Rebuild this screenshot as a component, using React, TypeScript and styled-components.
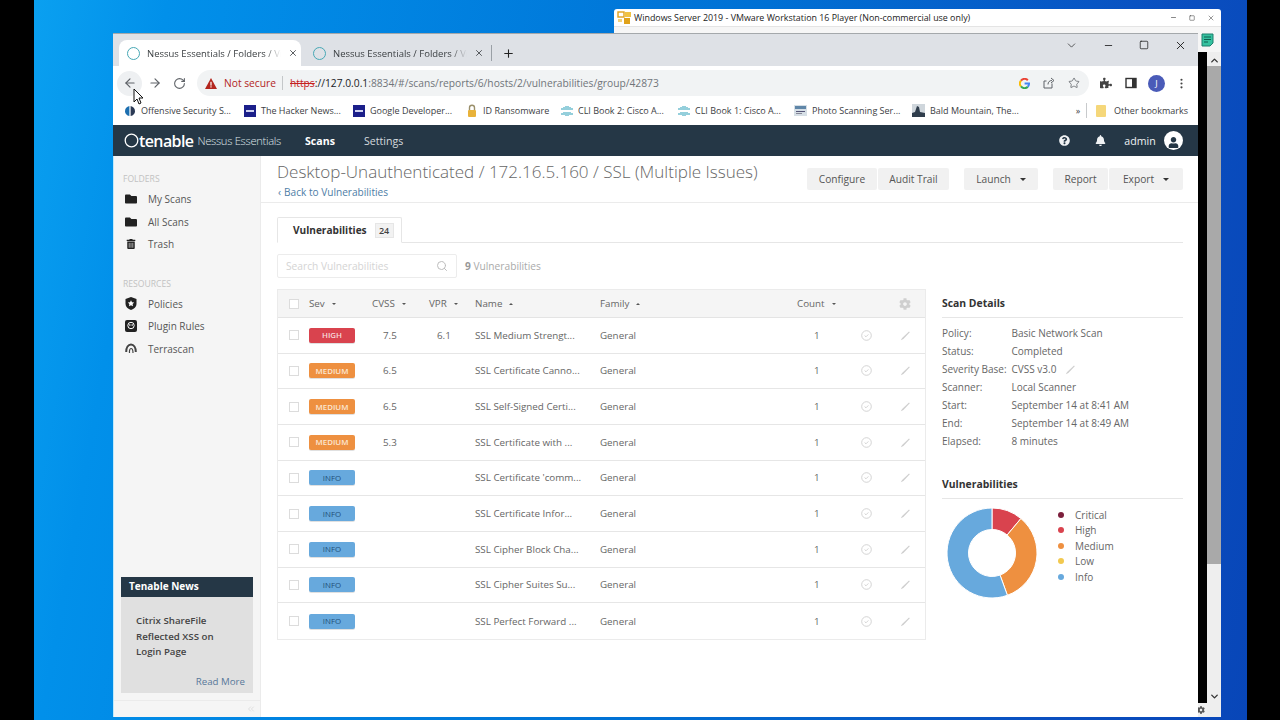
import styled, { createGlobalStyle } from "styled-components";
import { ArrowLeft, ArrowRight, ChevronDown, ChevronUp, ChevronsLeft, Minus, MoreVertical, Plus, RotateCw, Search, Square, Star, X } from "lucide-react";
import { FaBell, FaCog, FaFolder, FaPuzzlePiece, FaQuestionCircle, FaTrashAlt, FaUser } from "react-icons/fa";

const GlobalStyle = createGlobalStyle`
  html, body {
    margin: 0;
    padding: 0;
    width: 1280px;
    height: 720px;
    overflow: hidden;
    background: #000;
  }
  * { box-sizing: border-box; }
`;

const Screen = styled.div`
  display: flex;
  width: 1280px;
  height: 720px;
  padding-left: 34px;
  background: #000;
  font-family: "Open Sans", "Liberation Sans", sans-serif;
`;

const Desktop = styled.div`
  position: relative;
  width: 1213px;
  height: 720px;
  overflow: hidden;
  background: linear-gradient(100deg, #0aa0f0 0%, #0190ea 10%, #0070d4 55%, #0a4fc0 85%, #0846b8 100%);
`;

/* windows on the desktop */
const VmWindow = styled.div`
  position: absolute;
  left: 580px;
  top: 9px;
  width: 607px;
  height: 708px;
  display: flex;
  flex-direction: column;
  background: #fff;
  border-radius: 3px 3px 0 0;
`;

const VmTitle = styled.div`
  display: flex;
  align-items: center;
  height: 18px;
  padding: 0 6px 0 3px;
  gap: 2px;
  font-size: 8.9px;
  color: #222;
  border-bottom: 1px solid #e4e4e4;
  span {
    flex: 1;
  }
`;

const VmControls = styled.div`
  display: flex;
  align-items: center;
  gap: 12px;
  color: #333;
`;

const VmTools = styled.div`
  display: flex;
  justify-content: flex-end;
  align-items: flex-start;
  height: 25px;
  padding: 6px 7px 0 0;
  background: #f6f6f6;
`;

const VmBody = styled.div`
  flex: 1;
  display: flex;
  min-height: 0;
`;

const VmGuest = styled.div`
  flex: 1;
  display: flex;
  flex-direction: column;
  justify-content: flex-end;
`;

const GuestBlack = styled.div`
  flex: 1;
  background: #000;
`;

const VmStatus = styled.div`
  display: flex;
  justify-content: flex-end;
  align-items: center;
  height: 14px;
  color: #555;
  background: #f0f0f0;
`;

const GearSlot = styled.div`
  display: flex;
  justify-content: flex-start;
  width: 10px;
`;

const VmScroll = styled.div`
  display: flex;
  flex-direction: column;
  align-items: center;
  width: 14px;
  padding-top: 3px;
  background: #eeeeee;
  color: #333;
`;

const VmThumb = styled.div`
  flex: none;
  width: 100%;
  height: 498px;
  margin-bottom: 127px;
  background: #a9a9a9;
`;

const ChromeWindow = styled.div`
  position: absolute;
  left: 79px;
  top: 33px;
  width: 1085px;
  height: 684px;
  display: flex;
  flex-direction: column;
  background: #fff;
  border-top: 1px solid #a4a8ab;
`;

const TabStrip = styled.div`
  display: flex;
  align-items: flex-end;
  height: 32px;
  padding-left: 6px;
  background: #dee1e6;
  color: #3c4043;
`;

const BrowserTab = styled.div<{ $active?: boolean }>`
  display: flex;
  align-items: center;
  width: 182px;
  height: 26px;
  padding: 0 3px 0 8px;
  gap: 7px;
  margin-right: 4px;
  font-size: 9.5px;
  border-radius: 8px 8px 0 0;
  background: ${(props) => (props.$active ? "#fff" : "transparent")};
  span {
    flex: 1;
    white-space: nowrap;
    overflow: hidden;
    -webkit-mask-image: linear-gradient(90deg, #000 88%, transparent 100%);
    mask-image: linear-gradient(90deg, #000 88%, transparent 100%);
  }
`;

const FavRing = styled.i`
  flex: none;
  width: 13px;
  height: 13px;
  border-radius: 50%;
  border: 1px solid #47a8b5;
`;

const TabDivider = styled.div`
  width: 1px;
  height: 16px;
  margin: 0 10px 5px 0;
  background: #9aa0a6;
`;

const NewTab = styled.div`
  display: flex;
  margin-bottom: 6px;
  color: #222;
`;

const WinButtons = styled.div`
  margin-left: auto;
  align-self: stretch;
  display: flex;
  align-items: center;
  gap: 25px;
  padding: 0 11px 10px 0;
  color: #111;
`;

const Toolbar = styled.div`
  display: flex;
  align-items: center;
  height: 30px;
  padding: 4px 0 0 4px;
  color: #5f6368;
`;

const NavButton = styled.div<{ $hover?: boolean }>`
  display: flex;
  align-items: center;
  justify-content: center;
  width: 25px;
  height: 25px;
  border-radius: 50%;
  background: ${(props) => (props.$hover ? "#eef0f2" : "transparent")};
`;

const Omnibox = styled.div`
  display: flex;
  align-items: center;
  width: 892px;
  height: 26px;
  margin-left: 5px;
  padding: 0 9px 0 8px;
  border-radius: 13px;
  background: #f1f3f4;
  font-size: 10.25px;
`;

const NotSecure = styled.span`
  display: flex;
  align-items: center;
  gap: 7px;
  color: #b3261e;
  padding-right: 6px;
  border-right: 1px solid #c4c7c9;
  line-height: 14px;
`;

const UrlText = styled.span`
  margin-left: 7px;
  color: #70757a;
  white-space: nowrap;
  s {
    color: #c5221f;
  }
  b {
    font-weight: 400;
    color: #202124;
  }
`;

const OmniIcons = styled.div`
  margin-left: auto;
  display: flex;
  align-items: center;
  gap: 13px;
  color: #5f6368;
`;

const ToolIcons = styled.div`
  display: flex;
  align-items: center;
  gap: 13px;
  margin-left: 11px;
  color: #444;
`;

const Avatar = styled.div`
  display: flex;
  align-items: center;
  justify-content: center;
  width: 17px;
  height: 17px;
  margin: 0 -3px 0 -2px;
  border-radius: 50%;
  background: #4a5bb8;
  color: #fff;
  font-size: 9px;
`;

const Bookmarks = styled.div`
  display: flex;
  align-items: center;
  height: 29px;
  padding: 0 10px 0 11px;
  font-size: 9px;
  color: #3c4043;
  svg {
    flex: none;
  }
`;

const Bookmark = styled.div<{ $w: number }>`
  flex: none;
  display: flex;
  align-items: center;
  gap: 5px;
  width: ${(props) => props.$w}px;
  white-space: nowrap;
`;

const BookmarkEnd = styled.div`
  margin-left: auto;
  display: flex;
  align-items: center;
  gap: 7px;
  white-space: nowrap;
`;

const BarDivider = styled.i`
  width: 1px;
  height: 15px;
  margin: 0 1px 0 -1px;
  background: #c8cacc;
`;

const TopNav = styled.nav`
  display: flex;
  align-items: center;
  height: 31px;
  padding: 0 15px 0 11px;
  background: #253746;
  color: #fff;
`;

const Logo = styled.div`
  display: flex;
  align-items: center;
  width: 181px;
  font-size: 16px;
  font-weight: 600;
  letter-spacing: -0.6px;
  color: #fff;
  small {
    margin-left: 4px;
    font-size: 11.2px;
    font-weight: 300;
    letter-spacing: -0.3px;
    color: #dfe4e8;
  }
`;

const NavLink = styled.a<{ $active?: boolean }>`
  width: 59px;
  font-size: 10.6px;
  font-weight: ${(props) => (props.$active ? 700 : 400)};
  color: ${(props) => (props.$active ? "#fff" : "#d5dade")};
`;

const NavRight = styled.div`
  margin-left: auto;
  display: flex;
  align-items: center;
  font-size: 10.6px;
  color: #f0f2f4;
`;

const NavIcon = styled.div<{ $w?: number }>`
  display: flex;
  width: ${(props) => props.$w ?? 36}px;
  justify-content: center;
`;

const UserCircle = styled.div`
  display: flex;
  align-items: flex-end;
  justify-content: center;
  width: 19px;
  height: 19px;
  margin-left: 2px;
  padding-bottom: 2px;
  border-radius: 50%;
  background: #fff;
  color: #253746;
`;

const AppBody = styled.div`
  flex: 1;
  display: flex;
  min-height: 0;
`;

const Sidebar = styled.aside`
  display: flex;
  flex-direction: column;
  width: 148px;
  padding-top: 17px;
  background: #f5f5f5;
  border-right: 1px solid #ebebeb;
  border-left: 1px solid #bfe9fb;
`;

const SideLabel = styled.div`
  margin: 0 0 2px 9px;
  height: 13px;
  font-size: 8.6px;
  line-height: 13px;
  color: #c2c2c2;
`;

const SideItem = styled.div`
  display: flex;
  align-items: center;
  height: 22.5px;
  padding-left: 11px;
  gap: 11px;
  font-size: 10px;
  color: #555;
`;

const SideIcon = styled.div`
  display: flex;
  justify-content: center;
  width: 12px;
  color: #222;
`;

const SideGroup = styled.div`
  margin-bottom: 22px;
`;

const NewsBox = styled.div`
  margin: auto 7px 0 7px;
  height: 116px;
  display: flex;
  flex-direction: column;
  background: #e0e0e0;
`;

const NewsHead = styled.div`
  height: 20px;
  padding-left: 8px;
  font-size: 10px;
  font-weight: 700;
  line-height: 19px;
  background: #253746;
  color: #fff;
`;

const NewsTitle = styled.div`
  padding: 16px 10px 0 15px;
  font-size: 9.7px;
  font-weight: 600;
  line-height: 15.5px;
  color: #444;
`;

const NewsMore = styled.a`
  margin-top: auto;
  padding: 0 8px 5px 0;
  text-align: right;
  font-size: 9.7px;
  color: #58789a;
`;

const SideFooter = styled.div`
  display: flex;
  justify-content: flex-end;
  align-items: center;
  height: 17px;
  margin-top: 7px;
  padding-right: 4px;
  border-top: 1px solid #ebebeb;
  color: #d0d0d0;
`;

const Main = styled.main`
  flex: 1;
  display: flex;
  flex-direction: column;
  min-width: 0;
`;

const PageHead = styled.header`
  display: flex;
  justify-content: space-between;
  height: 47px;
  padding: 4px 15px 0 16px;
  border-bottom: 1px solid #ebebeb;
`;

const PageTitle = styled.h1`
  margin: 0;
  font-size: 17.05px;
  font-weight: 300;
  line-height: 23px;
  white-space: nowrap;
  color: #666;
`;

const BackLink = styled.a`
  display: block;
  font-size: 10.1px;
  line-height: 14px;
  margin-top: 2px;
  color: #4e7da6;
  i {
    font-style: normal;
    margin: 0 3px 0 1px;
  }
`;

const Actions = styled.div`
  display: flex;
  gap: 15px;
  padding-top: 8px;
`;

const ActionGroup = styled.div`
  display: flex;
  gap: 1px;
`;

const ActionButton = styled.button<{ $w: number }>`
  display: flex;
  align-items: center;
  justify-content: center;
  gap: 9px;
  width: ${(props) => props.$w}px;
  height: 22px;
  padding: 0;
  border: 0;
  border-radius: 2px;
  background: #f1f1f1;
  font-family: inherit;
  font-size: 10.2px;
  color: #555;
`;

const Caret = styled.i<{ $up?: boolean; $size?: number; $color?: string }>`
  display: inline-block;
  width: 0;
  height: 0;
  border-left: ${(props) => props.$size ?? 2}px solid transparent;
  border-right: ${(props) => props.$size ?? 2}px solid transparent;
  border-top: ${(props) => (props.$up ? "0" : `${props.$size ?? 2}px solid ${props.$color ?? "#555"}`)};
  border-bottom: ${(props) => (props.$up ? `${props.$size ?? 2}px solid ${props.$color ?? "#555"}` : "0")};
`;

const Content = styled.div`
  flex: 1;
  padding: 14px 15px 0 16px;
`;

const TabBar = styled.div`
  display: flex;
  height: 26px;
  border-bottom: 1px solid #e6e6e6;
`;

const VulnTab = styled.div`
  display: flex;
  align-items: center;
  width: 125px;
  height: 26px;
  padding-left: 15px;
  gap: 8px;
  font-size: 10.1px;
  font-weight: 700;
  color: #333;
  background: #fff;
  border: 1px solid #e6e6e6;
  border-bottom-color: #fff;
  border-radius: 2px 2px 0 0;
`;

const TabCount = styled.span`
  display: flex;
  align-items: center;
  justify-content: center;
  width: 19px;
  height: 15px;
  font-size: 9px;
  font-weight: 600;
  background: #f2f2f2;
  border: 1px solid #e6e6e6;
  color: #444;
`;

const FilterRow = styled.div`
  display: flex;
  align-items: center;
  gap: 8px;
  margin-top: 11px;
  height: 24px;
  font-size: 10.2px;
  color: #aaa;
  b {
    color: #999;
  }
`;

const SearchField = styled.div`
  display: flex;
  align-items: center;
  justify-content: space-between;
  width: 180px;
  height: 24px;
  padding: 0 8px;
  border: 1px solid #ececec;
  border-radius: 2px;
  color: #d4d4d4;
  font-size: 10.2px;
`;

const Split = styled.div`
  display: flex;
  gap: 16px;
  margin-top: 11px;
`;

const Table = styled.div`
  width: 649px;
  border: 1px solid #ebebeb;
  border-top: 0;
`;

const Columns = "31px 63px 57px 46px 125px 197px 55px 30px 44px";

const HeadRow = styled.div`
  display: grid;
  grid-template-columns: ${Columns};
  align-items: center;
  height: 29px;
  background: #f5f5f5;
  border-top: 1px solid #ebebeb;
  border-bottom: 1px solid #e4e4e4;
  font-size: 9.8px;
  color: #666;
`;

const BodyRow = styled.div`
  display: grid;
  grid-template-columns: ${Columns};
  align-items: center;
  height: 35.67px;
  border-bottom: 1px solid #e6e6e6;
  font-size: 9.8px;
  color: #666;
  &:last-child {
    border-bottom: 0;
  }
`;

const HeadCell = styled.div`
  display: flex;
  align-items: center;
  gap: 7px;
`;

const Check = styled.i`
  display: block;
  width: 10px;
  height: 10px;
  margin-left: 11px;
  background: #fff;
  border: 1px solid #dcdcdc;
`;

const Severity = styled.span<{ $bg: string; $color: string; $weight: number }>`
  display: flex;
  align-items: center;
  justify-content: center;
  width: 46px;
  height: 15px;
  font-size: 7.9px;
  font-weight: ${(props) => props.$weight};
  border-radius: 2px;
  background: ${(props) => props.$bg};
  color: ${(props) => props.$color};
  box-shadow: 0 1px 0 rgba(0, 0, 0, 0.12);
`;

const ScoreCell = styled.div<{ $pad: number }>`
  padding-left: ${(props) => props.$pad}px;
`;

const Ellipsis = styled.div`
  white-space: nowrap;
`;

const IconCell = styled.div<{ $pad?: number }>`
  display: flex;
  padding-left: ${(props) => props.$pad ?? 0}px;
  color: #cfcfcf;
`;

const SidePanel = styled.section`
  width: 241px;
  margin-top: 1px;
`;

const PanelTitle = styled.h3`
  margin: 0;
  height: 28px;
  font-size: 10.4px;
  font-weight: 700;
  line-height: 27px;
  color: #333;
  border-bottom: 1px solid #e6e6e6;
`;

const DetailList = styled.div`
  padding-top: 6px;
  margin-bottom: 21px;
`;

const DetailRow = styled.div`
  display: flex;
  align-items: center;
  height: 18px;
  font-size: 10px;
  color: #666;
`;

const DetailKey = styled.div`
  width: 69.5px;
  white-space: nowrap;
`;

const DetailEdit = styled.span`
  display: flex;
  margin-left: 9px;
  color: #cfcfcf;
`;

const ChartRow = styled.div`
  display: flex;
  padding: 8px 0 0 4px;
`;

const Legend = styled.div`
  display: flex;
  flex-direction: column;
  margin-left: 20px;
`;

const LegendItem = styled.div`
  display: flex;
  align-items: center;
  gap: 11px;
  height: 15.5px;
  font-size: 10px;
  color: #666;
`;

const Dot = styled.i<{ $color: string }>`
  width: 6px;
  height: 6px;
  border-radius: 50%;
  background: ${(props) => props.$color};
`;

const CursorMark = styled.svg`
  position: absolute;
  left: 99px;
  top: 88px;
`;

const BOOKMARKS = [
  { label: "Offensive Security S...", w: 120, kind: "off" },
  { label: "The Hacker News...", w: 109, kind: "thn" },
  { label: "Google Developer...", w: 113, kind: "thn" },
  { label: "ID Ransomware", w: 95, kind: "lock" },
  { label: "CLI Book 2: Cisco A...", w: 117, kind: "cisco" },
  { label: "CLI Book 1: Cisco A...", w: 116, kind: "cisco" },
  { label: "Photo Scanning Ser...", w: 118, kind: "photo" },
  { label: "Bald Mountain, The...", w: 100, kind: "mount" },
];

const ROWS = [
  { sev: "HIGH", cvss: "7.5", vpr: "6.1", name: "SSL Medium Strengt..." },
  { sev: "MEDIUM", cvss: "6.5", vpr: "", name: "SSL Certificate Canno..." },
  { sev: "MEDIUM", cvss: "6.5", vpr: "", name: "SSL Self-Signed Certi..." },
  { sev: "MEDIUM", cvss: "5.3", vpr: "", name: "SSL Certificate with ..." },
  { sev: "INFO", cvss: "", vpr: "", name: "SSL Certificate 'comm..." },
  { sev: "INFO", cvss: "", vpr: "", name: "SSL Certificate Infor..." },
  { sev: "INFO", cvss: "", vpr: "", name: "SSL Cipher Block Cha..." },
  { sev: "INFO", cvss: "", vpr: "", name: "SSL Cipher Suites Su..." },
  { sev: "INFO", cvss: "", vpr: "", name: "SSL Perfect Forward ..." },
];

const SEV_STYLE: Record<string, { bg: string; color: string; weight: number }> = {
  HIGH: { bg: "#d9434e", color: "#f6dadc", weight: 600 },
  MEDIUM: { bg: "#ee9040", color: "#fbe6d2", weight: 600 },
  INFO: { bg: "#67a9dd", color: "#1f4f78", weight: 400 },
};

const DETAILS = [
  ["Policy:", "Basic Network Scan"],
  ["Status:", "Completed"],
  ["Severity Base:", "CVSS v3.0"],
  ["Scanner:", "Local Scanner"],
  ["Start:", "September 14 at 8:41 AM"],
  ["End:", "September 14 at 8:49 AM"],
  ["Elapsed:", "8 minutes"],
];

const LEGEND = [
  { label: "Critical", color: "#7c1f3c" },
  { label: "High", color: "#d9434e" },
  { label: "Medium", color: "#ee9040" },
  { label: "Low", color: "#f2c94f" },
  { label: "Info", color: "#67a9dd" },
];

const SLICES = [
  { value: 1, color: "#d9434e" },
  { value: 3, color: "#ee9040" },
  { value: 5, color: "#67a9dd" },
];

function slicePath(start: number, end: number) {
  const c = 46;
  const R = 45;
  const r = 23.5;
  const pt = (rad: number, a: number) =>
    `${(c + rad * Math.sin(a)).toFixed(2)} ${(c - rad * Math.cos(a)).toFixed(2)}`;
  const large = end - start > Math.PI ? 1 : 0;
  return `M${pt(R, start)}A${R} ${R} 0 ${large} 1 ${pt(R, end)}L${pt(r, end)}A${r} ${r} 0 ${large} 0 ${pt(r, start)}Z`;
}

function Donut() {
  const total = SLICES.reduce((sum, s) => sum + s.value, 0);
  let acc = 0;
  return (
    <svg width="92" height="92" viewBox="0 0 92 92">
      {SLICES.map((s) => {
        const start = (acc / total) * Math.PI * 2;
        acc += s.value;
        const end = (acc / total) * Math.PI * 2;
        return <path key={s.color} d={slicePath(start, end)} fill={s.color} stroke="#fff" strokeWidth="1" />;
      })}
    </svg>
  );
}

function GoogleMark() {
  return (
    <svg width="11" height="11" viewBox="0 0 11 11" fill="none" strokeWidth="2">
      <path d="M8.8 2.2A4.5 4.5 0 0 0 2 2.6" stroke="#ea4335" />
      <path d="M2 2.6A4.5 4.5 0 0 0 2 8.4" stroke="#fbbc05" />
      <path d="M2 8.4A4.5 4.5 0 0 0 8.8 8.8" stroke="#34a853" />
      <path d="M8.8 8.8A4.5 4.5 0 0 0 10 5.5H5.6" stroke="#4285f4" />
    </svg>
  );
}

function BookmarkIcon({ kind }: { kind: string }) {
  if (kind === "thn")
    return (
      <svg width="12" height="12" viewBox="0 0 12 12">
        <rect width="12" height="12" fill="#1b1f8a" />
        <rect x="2" y="5" width="8" height="2" fill="#cfd2f2" />
      </svg>
    );
  if (kind === "lock")
    return (
      <svg width="12" height="13" viewBox="0 0 12 13">
        <path d="M3.5 6V3.8a2.5 2.5 0 0 1 5 0V6" fill="none" stroke="#9a8f6a" strokeWidth="1.4" />
        <rect x="2" y="6" width="8" height="7" rx="1" fill="#e8b23a" />
      </svg>
    );
  if (kind === "cisco")
    return (
      <svg width="12" height="12" viewBox="0 0 12 12" stroke="#2a9fb8" strokeWidth="1">
        <path d="M1 3v2M3 2v3M5 1v4M7 1v4M9 2v3M11 3v2M1 8v2M3 7v3M5 7v4M7 7v4M9 7v3M11 8v2" />
      </svg>
    );
  if (kind === "photo")
    return (
      <svg width="13" height="11" viewBox="0 0 13 11">
        <rect width="13" height="11" fill="#d6dfe6" />
        <rect x="1" y="1" width="11" height="3" fill="#5f86a8" />
        <rect x="2" y="6" width="9" height="1" fill="#557" />
        <rect x="2" y="8" width="6" height="1" fill="#889" />
      </svg>
    );
  if (kind === "mount")
    return (
      <svg width="13" height="13" viewBox="0 0 13 13">
        <rect width="13" height="13" fill="#cfd6dc" />
        <path d="M0 13V9l3-1 2-6 2 1 1 5 5 1v4z" fill="#2f3d4c" />
      </svg>
    );
  return (
    <svg width="12" height="12" viewBox="0 0 12 12">
      <path d="M5.4 1C2.8 1.6 1 3.6 1 6.2c0 2.3 1.7 4.3 4.4 4.8z" fill="#1c6fb0" />
      <path d="M6.6 1c2.6.6 4.4 2.6 4.4 5.2 0 2.3-1.7 4.3-4.4 4.8z" fill="#2b3a55" />
    </svg>
  );
}

function Pencil({ size = 11 }: { size?: number }) {
  return (
    <svg width={size} height={size} viewBox="0 0 11 11" fill="currentColor">
      <path d="M0.8 10.2l1.3-2.3L9 1.5l.8.8-6.4 6.7z" />
    </svg>
  );
}

function CheckRing() {
  return (
    <svg width="11" height="11" viewBox="0 0 11 11" fill="none" stroke="currentColor" strokeWidth="0.9">
      <circle cx="5.5" cy="5.5" r="4.8" />
      <path d="M3.6 5.6l1.4 1.2 2.4-2.4" />
    </svg>
  );
}

export default function App() {
  return (
    <Screen>
      <GlobalStyle />
      <Desktop>
        <VmWindow>
          <VmTitle>
            <svg width="15" height="14" viewBox="0 0 15 14">
              <rect x="1" y="1" width="6" height="5" fill="none" stroke="#e0a21a" strokeWidth="1.4" />
              <rect x="8" y="1" width="6" height="5" fill="#f0c244" />
              <rect x="7" y="7" width="6" height="6" fill="#e0a21a" />
              <rect x="1" y="8" width="4" height="3" fill="#f2d27a" />
            </svg>
            <span>Windows Server 2019 - VMware Workstation 16 Player (Non-commercial use only)</span>
            <VmControls>
              <Minus size={7} strokeWidth={2} />
              <Square size={6} strokeWidth={2} />
              <X size={8} strokeWidth={1.5} />
            </VmControls>
          </VmTitle>
          <VmTools>
            <svg width="13" height="14" viewBox="0 0 13 14">
              <path d="M1 1h11v9l-3 3H1z" fill="#35c2a0" stroke="#1d7f6d" />
              <path d="M3 4h7M3 6.5h7M3 9h4" stroke="#0f5f50" />
            </svg>
          </VmTools>
          <VmBody>
            <VmGuest>
              <GuestBlack />
              <VmStatus>
                <GearSlot>
                  <FaCog size={8} />
                </GearSlot>
              </VmStatus>
            </VmGuest>
            <VmScroll>
              <ChevronUp size={11} strokeWidth={3} />
              <VmThumb />
              <ChevronDown size={11} strokeWidth={3} />
            </VmScroll>
          </VmBody>
        </VmWindow>

        <ChromeWindow>
          <TabStrip>
            <BrowserTab $active>
              <FavRing />
              <span>Nessus Essentials / Folders / View</span>
              <X size={10} strokeWidth={2} />
            </BrowserTab>
            <BrowserTab>
              <FavRing />
              <span>Nessus Essentials / Folders / View</span>
              <X size={10} strokeWidth={2} />
            </BrowserTab>
            <TabDivider />
            <NewTab>
              <Plus size={13} strokeWidth={2} />
            </NewTab>
            <WinButtons>
              <ChevronDown size={13} strokeWidth={1.2} />
              <Minus size={11} strokeWidth={1.7} />
              <Square size={10} strokeWidth={1.7} />
              <X size={13} strokeWidth={1.6} />
            </WinButtons>
          </TabStrip>

          <Toolbar>
            <NavButton $hover>
              <ArrowLeft size={14} strokeWidth={2} />
            </NavButton>
            <NavButton>
              <ArrowRight size={14} strokeWidth={2} />
            </NavButton>
            <NavButton>
              <RotateCw size={13} strokeWidth={2} />
            </NavButton>
            <Omnibox>
              <NotSecure>
                <svg width="12" height="11" viewBox="0 0 12 11">
                  <path d="M6 0l6 11H0z" fill="#b3261e" />
                  <rect x="5.4" y="3.8" width="1.2" height="3.8" fill="#fff" />
                  <rect x="5.4" y="8.3" width="1.2" height="1.2" fill="#fff" />
                </svg>
                Not secure
              </NotSecure>
              <UrlText>
                <s>https</s>
                <b>://127.0.0.1</b>:8834/#/scans/reports/6/hosts/2/vulnerabilities/group/42873
              </UrlText>
              <OmniIcons>
                <GoogleMark />
                <svg width="12" height="12" viewBox="0 0 12 12" fill="none" stroke="currentColor">
                  <path d="M9 6.5V11H1V4h2.5M5 7.5C5 5 6.5 3.5 9 3.5M8 1l3 2.5L8 6" />
                </svg>
                <Star size={12} strokeWidth={1.6} />
              </OmniIcons>
            </Omnibox>
            <ToolIcons>
              <FaPuzzlePiece size={12} />
              <svg width="12" height="12" viewBox="0 0 12 12">
                <rect x="1" y="1.5" width="10" height="9" fill="none" stroke="#333" strokeWidth="1.4" />
                <rect x="7" y="1.5" width="4" height="9" fill="#333" />
              </svg>
              <Avatar>J</Avatar>
              <MoreVertical size={13} strokeWidth={2} />
            </ToolIcons>
          </Toolbar>

          <Bookmarks>
            {BOOKMARKS.map((b) => (
              <Bookmark key={b.label} $w={b.w}>
                <BookmarkIcon kind={b.kind} />
                {b.label}
              </Bookmark>
            ))}
            <BookmarkEnd>
              »
              <BarDivider />
              <svg width="12" height="14" viewBox="0 0 12 14">
                <rect x="1" y="1" width="10" height="12" rx="1" fill="#f5d77a" />
              </svg>
              Other bookmarks
            </BookmarkEnd>
          </Bookmarks>

          <TopNav>
            <Logo>
              <svg width="15" height="15" viewBox="0 0 15 15" fill="none" stroke="#fff" strokeWidth="1.3">
                <circle cx="7.5" cy="7.5" r="6.3" />
              </svg>
              tenable
              <small>Nessus Essentials</small>
            </Logo>
            <NavLink $active>Scans</NavLink>
            <NavLink>Settings</NavLink>
            <NavRight>
              <NavIcon>
                <FaQuestionCircle size={11} />
              </NavIcon>
              <NavIcon>
                <FaBell size={11} />
              </NavIcon>
              <NavIcon as="span" $w={44}>admin</NavIcon>
              <UserCircle>
                <FaUser size={11} />
              </UserCircle>
            </NavRight>
          </TopNav>

          <AppBody>
            <Sidebar>
              <SideGroup>
                <SideLabel>FOLDERS</SideLabel>
                <SideItem>
                  <SideIcon><FaFolder size={12} /></SideIcon>
                  My Scans
                </SideItem>
                <SideItem>
                  <SideIcon><FaFolder size={12} /></SideIcon>
                  All Scans
                </SideItem>
                <SideItem>
                  <SideIcon><FaTrashAlt size={10} /></SideIcon>
                  Trash
                </SideItem>
              </SideGroup>
              <SideGroup>
                <SideLabel>RESOURCES</SideLabel>
                <SideItem>
                  <SideIcon>
                    <svg width="12" height="13" viewBox="0 0 12 13">
                      <path d="M6 0l5.5 2v5c0 3-2.5 5-5.5 6-3-1-5.5-3-5.5-6V2z" fill="#222" />
                      <path d="M6 3.2l1 2.1 2.2.3-1.6 1.5.4 2.2-2-1-2 1 .4-2.2-1.6-1.5 2.2-.3z" fill="#fff" />
                    </svg>
                  </SideIcon>
                  Policies
                </SideItem>
                <SideItem>
                  <SideIcon>
                    <svg width="12" height="12" viewBox="0 0 12 12">
                      <rect width="12" height="12" rx="2" fill="#222" />
                      <circle cx="6" cy="5.5" r="3.2" fill="none" stroke="#fff" />
                      <circle cx="4.8" cy="5" r="0.8" fill="#fff" />
                      <circle cx="7.2" cy="5" r="0.8" fill="#fff" />
                    </svg>
                  </SideIcon>
                  Plugin Rules
                </SideItem>
                <SideItem>
                  <SideIcon>
                    <svg width="12" height="11" viewBox="0 0 12 11" fill="none" stroke="#444" strokeWidth="2">
                      <path d="M1.2 9c0-4.5 2-7.5 4.8-7.5S10.800 4.500 10.800 9" />
                      <path d="M4.500 10c-.3-2.500.3-4.500 1.500-4.500S8 7.500 8 10" strokeWidth="1.2" />
                    </svg>
                  </SideIcon>
                  Terrascan
                </SideItem>
              </SideGroup>
              <NewsBox>
                <NewsHead>Tenable News</NewsHead>
                <NewsTitle>
                  Citrix ShareFile
                  <br />
                  Reflected XSS on
                  <br />
                  Login Page
                </NewsTitle>
                <NewsMore>Read More</NewsMore>
              </NewsBox>
              <SideFooter>
                <ChevronsLeft size={10} strokeWidth={1.5} />
              </SideFooter>
            </Sidebar>

            <Main>
              <PageHead>
                <div>
                  <PageTitle>Desktop-Unauthenticated / 172.16.5.160 / SSL (Multiple Issues)</PageTitle>
                  <BackLink><i>‹</i>Back to Vulnerabilities</BackLink>
                </div>
                <Actions>
                  <ActionGroup>
                    <ActionButton $w={70}>Configure</ActionButton>
                    <ActionButton $w={71}>Audit Trail</ActionButton>
                  </ActionGroup>
                  <ActionGroup>
                    <ActionButton $w={74}>
                      Launch <Caret $size={3.5} $color="#333" />
                    </ActionButton>
                  </ActionGroup>
                  <ActionGroup>
                    <ActionButton $w={55}>Report</ActionButton>
                    <ActionButton $w={74}>
                      Export <Caret $size={3.5} $color="#333" />
                    </ActionButton>
                  </ActionGroup>
                </Actions>
              </PageHead>

              <Content>
                <TabBar>
                  <VulnTab>
                    Vulnerabilities
                    <TabCount>24</TabCount>
                  </VulnTab>
                </TabBar>
                <FilterRow>
                  <SearchField>
                    Search Vulnerabilities
                    <Search size={12} color="#bdbdbd" />
                  </SearchField>
                  <span>
                    <b>9</b> Vulnerabilities
                  </span>
                </FilterRow>

                <Split>
                  <Table>
                    <HeadRow>
                      <Check />
                      <HeadCell>Sev <Caret /></HeadCell>
                      <HeadCell>CVSS <Caret /></HeadCell>
                      <HeadCell>VPR <Caret /></HeadCell>
                      <HeadCell>Name <Caret $up /></HeadCell>
                      <HeadCell>Family <Caret $up /></HeadCell>
                      <HeadCell>Count <Caret /></HeadCell>
                      <div />
                      <IconCell $pad={17}><FaCog size={12} /></IconCell>
                    </HeadRow>
                    {ROWS.map((row) => (
                      <BodyRow key={row.name}>
                        <Check />
                        <div>
                          <Severity
                            $bg={SEV_STYLE[row.sev].bg}
                            $color={SEV_STYLE[row.sev].color}
                            $weight={SEV_STYLE[row.sev].weight}
                          >
                            {row.sev}
                          </Severity>
                        </div>
                        <ScoreCell $pad={11}>{row.cvss}</ScoreCell>
                        <ScoreCell $pad={8}>{row.vpr}</ScoreCell>
                        <Ellipsis>{row.name}</Ellipsis>
                        <div>General</div>
                        <ScoreCell $pad={17}>1</ScoreCell>
                        <IconCell $pad={9}><CheckRing /></IconCell>
                        <IconCell $pad={18}><Pencil /></IconCell>
                      </BodyRow>
                    ))}
                  </Table>

                  <SidePanel>
                    <PanelTitle>Scan Details</PanelTitle>
                    <DetailList>
                      {DETAILS.map(([key, value]) => (
                        <DetailRow key={key}>
                          <DetailKey>{key}</DetailKey>
                          {value}
                          {key === "Severity Base:" && (
                            <DetailEdit><Pencil /></DetailEdit>
                          )}
                        </DetailRow>
                      ))}
                    </DetailList>
                    <PanelTitle>Vulnerabilities</PanelTitle>
                    <ChartRow>
                      <Donut />
                      <Legend>
                        {LEGEND.map((item) => (
                          <LegendItem key={item.label}>
                            <Dot $color={item.color} />
                            {item.label}
                          </LegendItem>
                        ))}
                      </Legend>
                    </ChartRow>
                  </SidePanel>
                </Split>
              </Content>
            </Main>
          </AppBody>
        </ChromeWindow>

        <CursorMark width="12" height="17" viewBox="0 0 12 17">
          <path d="M1 1v13l3-3 2 5 2-1-2-5h4z" fill="#fff" stroke="#111" strokeWidth="1" strokeLinejoin="round" />
        </CursorMark>
      </Desktop>
    </Screen>
  );
}
